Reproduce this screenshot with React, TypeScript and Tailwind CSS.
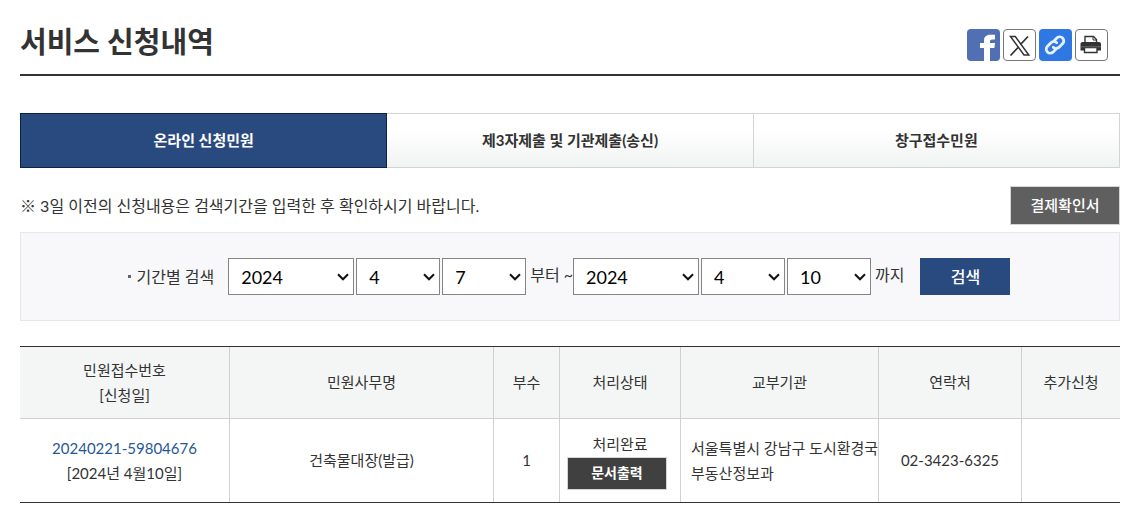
import { useState } from "react";

const tabs = ["온라인 신청민원", "제3자제출 및 기관제출(송신)", "창구접수민원"];

const years = ["2022", "2023", "2024"];
const months = Array.from({ length: 12 }, (_, i) => String(i + 1));
const days = Array.from({ length: 31 }, (_, i) => String(i + 1));

const rows = [
  {
    id: "20240221-59804676",
    date: "[2024년 4월10일]",
    name: "건축물대장(발급)",
    count: 1,
    status: "처리완료",
    office: ["서울특별시 강남구 도시환경국", "부동산정보과"],
    phone: "02-3423-6325",
  },
];

const thClass = "border-b border-l border-[#cfd1d1] p-0 font-normal first:border-l-0";
const tdClass = "border-l border-[#cfd1d1] p-0 text-center first:border-l-0";

export default function App() {
  const [tab, setTab] = useState(0);

  return (
    <div className="bg-white pt-6 pr-[13px] pb-2 pl-5 font-['Lato','Noto_Sans_CJK_KR',sans-serif] text-[15px] text-[#333]">
      <header className="flex h-13 items-start justify-between border-b-2 border-[#333]">
        <h1 className="text-[29px] leading-9 font-bold">서비스 신청내역</h1>
        <ShareLinks />
      </header>

      <nav className="mt-[37px] flex">
        {tabs.map((name, i) => (
          <button
            key={name}
            type="button"
            onClick={() => setTab(i)}
            className={
              i === tab
                ? "h-[55px] flex-1 border border-[#0b2240] bg-[#294a7f] font-bold text-white"
                : "h-[55px] flex-1 border border-l-0 border-[#d3d5d5] bg-linear-to-b from-white from-30% to-[#f1f2f2] font-bold"
            }
          >
            {name}
          </button>
        ))}
      </nav>

      <div className="mt-[18px] flex items-center justify-between">
        <p className="text-base">※ 3일 이전의 신청내용은 검색기간을 입력한 후 확인하시기 바랍니다.</p>
        <button type="button" className="h-[39px] w-[110px] border border-[#d5d5d5] bg-[#5f5f5f] font-medium text-white">
          결제확인서
        </button>
      </div>

      <SearchForm />

      <table className="mt-[25px] w-full table-fixed border-separate border-spacing-0 border-y border-[#333] leading-[25px]">
        <colgroup>
          <col className="w-[19%]" />
          <col className="w-[24%]" />
          <col className="w-[6%]" />
          <col className="w-[11%]" />
          <col className="w-[18%]" />
          <col className="w-[13%]" />
          <col className="w-[9%]" />
        </colgroup>
        <thead>
          <tr className="h-[72px] bg-[#f4f6f6]">
            <th className={thClass}>
              민원접수번호
              <br />
              [신청일]
            </th>
            <th className={thClass}>민원사무명</th>
            <th className={thClass}>부수</th>
            <th className={thClass}>처리상태</th>
            <th className={thClass}>교부기관</th>
            <th className={thClass}>연락처</th>
            <th className={thClass}>추가신청</th>
          </tr>
        </thead>
        <tbody>
          {rows.map((row) => (
            <tr key={row.id} className="h-[83px]">
              <td className={tdClass}>
                <a href="#" className="text-[#1f5799]">
                  {row.id}
                </a>
                <br />
                {row.date}
              </td>
              <td className={tdClass}>{row.name}</td>
              <td className={tdClass}>{row.count}</td>
              <td className={tdClass}>
                <div>{row.status}</div>
                <button
                  type="button"
                  className="mr-1.5 block h-[33px] w-[100px] justify-self-center border border-[#d5d5d5] bg-[#404040] text-sm font-bold text-white"
                >
                  문서출력
                </button>
              </td>
              <td className="border-l border-[#cfd1d1] py-0 pr-0 pl-2.5 whitespace-nowrap">
                {row.office.map((line) => (
                  <div key={line}>{line}</div>
                ))}
              </td>
              <td className={tdClass}>{row.phone}</td>
              <td className={tdClass}></td>
            </tr>
          ))}
        </tbody>
      </table>
    </div>
  );
}

function SearchForm() {
  return (
    <form
      onSubmit={(e) => e.preventDefault()}
      className="mt-[7px] flex h-[89px] items-center justify-center border border-[#e6e6eb] bg-[#f8f8fb] pr-0.5 text-base"
    >
      <span className="mr-1.5 size-[3px] bg-[#666]" />
      <span className="mr-3.5">기간별 검색</span>
      <div className="flex gap-0.5">
        <DateSelect label="시작 연도" options={years} value="2024" wide />
        <DateSelect label="시작 월" options={months} value="4" />
        <DateSelect label="시작 일" options={days} value="7" />
      </div>
      <span className="ml-1 pb-1">부터 ~</span>
      <div className="flex gap-0.5">
        <DateSelect label="종료 연도" options={years} value="2024" wide />
        <DateSelect label="종료 월" options={months} value="4" />
        <DateSelect label="종료 일" options={days} value="10" />
      </div>
      <span className="mr-4 ml-1 pb-1">까지</span>
      <button type="submit" className="h-[37px] w-[90px] bg-[#294a7f] font-medium text-white">
        검색
      </button>
    </form>
  );
}

type DateSelectProps = { label: string; options: string[]; value: string; wide?: boolean };

function DateSelect({ label, options, value, wide }: DateSelectProps) {
  return (
    <div className={wide ? "relative w-[126px]" : "relative w-[84px]"}>
      <select
        aria-label={label}
        defaultValue={value}
        className="block h-[37px] w-full appearance-none border border-[#858585] bg-white pl-3 text-lg text-black"
      >
        {options.map((o) => (
          <option key={o}>{o}</option>
        ))}
      </select>
      <svg
        viewBox="0 0 12 8"
        className="pointer-events-none absolute top-[15px] right-[5px] h-2 w-3"
        fill="none"
        stroke="#111"
        strokeWidth="2"
      >
        <path d="M1 1.300l5 5 5-5" />
      </svg>
    </div>
  );
}

function ShareLinks() {
  return (
    <div className="mt-[5px] mr-3 flex gap-[3px]">
      <a href="#" aria-label="페이스북" className="h-8 w-[33px] overflow-hidden rounded-sm bg-[#5070b3]">
        <svg viewBox="0 0 33 32" className="size-full">
          <path
            d="M17 32V19h-4v-5h4v-2.500C17 8 19.500 5.800 23 5.800h5v4.700h-2.800c-1.500 0-2.200.7-2.200 2V14h5l-.6 5H23v13z"
            fill="#fff"
          />
        </svg>
      </a>
      <a href="#" aria-label="X" className="h-8 w-[33px] rounded-sm border border-[#777] bg-white">
        <svg viewBox="0 0 31 30" className="size-full" fill="none" stroke="#333">
          <path d="M6.500 6.500h4.800l13.500 18.500H20z" strokeWidth="1.500" />
          <path d="M24 6.500l-7.500 8M14 17.500L6.500 25.500" strokeWidth="1.800" />
        </svg>
      </a>
      <a href="#" aria-label="링크 복사" className="h-8 w-[33px] rounded-sm bg-[#2f78e4]">
        <svg viewBox="0 0 33 32" className="size-full" fill="none" stroke="#e8f1ff" strokeWidth="2.800" strokeLinecap="round">
          <g transform="translate(16 16) rotate(-45)">
            <path d="M-2.500 3.600H-6.500a4 4 0 0 1-3.800-4 4 4 0 0 1 3.800-4H-1a4 4 0 0 1 3.800 4" />
            <path d="M2.500-3.600H6.500a4 4 0 0 1 3.800 4 4 4 0 0 1-3.800 4H1a4 4 0 0 1-3.800-4" />
          </g>
        </svg>
      </a>
      <a href="#" aria-label="인쇄" className="h-8 w-[33px] rounded-sm border border-[#777] bg-white">
        <svg viewBox="0 0 31 30" className="size-full">
          <path d="M9 13V6.500h8.500l3 3V13" fill="#fff" stroke="#333" strokeWidth="1.400" />
          <path d="M17 6.500V10h3.500" fill="none" stroke="#333" />
          <path d="M6.500 12h16.500a2 2 0 0 1 2 2v6.500H4.500V14a2 2 0 0 1 2-2z" fill="#333" />
          <path d="M8.500 17.500h12.500v5H8.500z" fill="#fff" stroke="#333" strokeWidth="1.400" />
          <path d="M4.500 16.800h20.500" stroke="#888" strokeWidth=".7" />
        </svg>
      </a>
    </div>
  );
}
